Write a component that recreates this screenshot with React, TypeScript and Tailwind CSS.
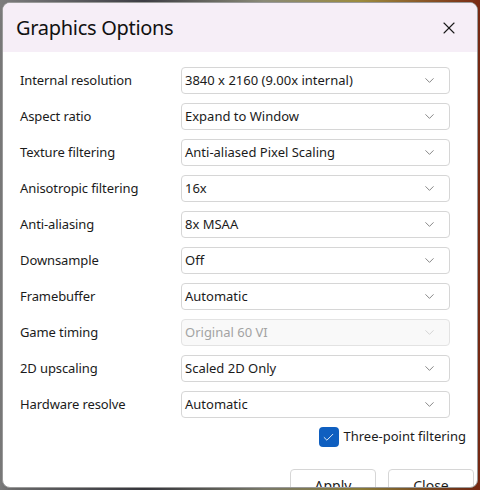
import { ChevronDown, X, Check } from "lucide-react";

type Row = { label: string; value: string; disabled?: boolean };

const rows: Row[] = [
  { label: "Internal resolution", value: "3840 x 2160 (9.00x internal)" },
  { label: "Aspect ratio", value: "Expand to Window" },
  { label: "Texture filtering", value: "Anti-aliased Pixel Scaling" },
  { label: "Anisotropic filtering", value: "16x" },
  { label: "Anti-aliasing", value: "8x MSAA" },
  { label: "Downsample", value: "Off" },
  { label: "Framebuffer", value: "Automatic" },
  { label: "Game timing", value: "Original 60 VI", disabled: true },
  { label: "2D upscaling", value: "Scaled 2D Only" },
  { label: "Hardware resolve", value: "Automatic" },
];

const font = { fontFamily: '"Noto Sans", "Open Sans", sans-serif' };

const Select = ({ value, disabled }: { value: string; disabled?: boolean }) => (
  <div
    className={
      disabled
        ? "flex h-[27px] w-[269px] items-center justify-between rounded-[4px] border border-[#e3e3e3] bg-[#f9f9f9] pl-[3px] pr-[12px] text-[13px] text-[#a3a3a3]"
        : "flex h-[27px] w-[269px] items-center justify-between rounded-[4px] border border-[#d6d6d6] bg-white pl-[3px] pr-[12px] text-[13px] text-[#1b1b1b]"
    }
  >
    <span>{value}</span>
    <ChevronDown
      size={15}
      strokeWidth={1.2}
      className={disabled ? "text-[#c8c8c8]" : "text-[#5f5f5f]"}
    />
  </div>
);

export default function App() {
  return (
    <div
      className="h-[490px] w-[480px] overflow-hidden pl-[2px] pt-[2px]"
      style={{
        background:
          "linear-gradient(90deg, #7d7d7d 0%, #3d3d44 30%, #8a8a78 55%, #9c8b3e 75%, #7a2a14 100%)",
      }}
    >
      <div
        className="flex h-[486px] w-[476px] flex-col overflow-hidden rounded-[8px] border border-[#9a9a9a] bg-white shadow-lg"
        style={font}
      >
        {/* title bar */}
        <div className="flex h-[49px] shrink-0 items-center justify-between bg-[#f6eef7] pl-[13px] pr-[18px]">
          <span className="text-[20px] tracking-[-0.3px] text-[#111]">Graphics Options</span>
          <X size={20} strokeWidth={1.3} className="text-[#1a1a1a]" />
        </div>

        <div className="flex flex-col pl-[17px] pt-[15px]">
          {rows.map((r) => (
            <div key={r.label} className="mb-[9px] flex items-center">
              <span className="w-[161px] text-[13px] tracking-[-0.1px] text-[#1b1b1b]">
                {r.label}
              </span>
              <Select value={r.value} disabled={r.disabled} />
            </div>
          ))}
        </div>

        {/* checkbox */}
        <div className="flex items-center justify-end gap-[5px] pr-[11px]">
          <div className="flex h-[20px] w-[20px] items-center justify-center rounded-[4px] bg-[#0f5fc0]">
            <Check size={13} strokeWidth={1.6} className="text-white" />
          </div>
          <span className="text-[13px] text-[#1b1b1b]">Three-point filtering</span>
        </div>

        <div className="mt-[22px] flex justify-end gap-[12px] pr-[3px]">
          <div className="flex h-[32px] w-[86px] items-center justify-center rounded-[4px] border border-[#d6d6d6] text-[14px] text-[#1b1b1b]">
            Apply
          </div>
          <div className="flex h-[32px] w-[86px] items-center justify-center rounded-[4px] border border-[#d6d6d6] text-[14px] text-[#1b1b1b]">
            Close
          </div>
        </div>
      </div>
    </div>
  );
}
